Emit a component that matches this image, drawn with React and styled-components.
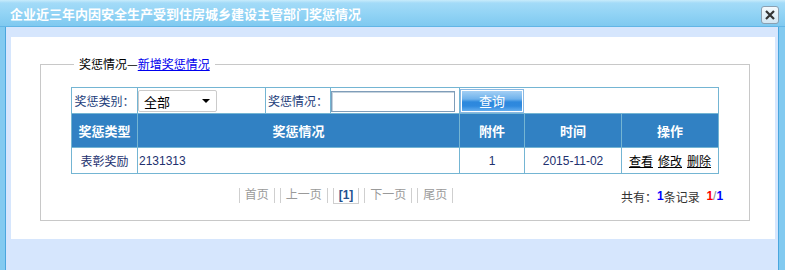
import styled, { createGlobalStyle } from "styled-components";

const GlobalStyle = createGlobalStyle`
    html, body {
        margin: 0;
        padding: 0;
        background: #d6e6fd;
    }
    body {
        font-family: "Liberation Sans", "Noto Sans CJK SC", sans-serif;
        font-size: 12px;
    }
`;

const App = () => {
    return (
        <>
            <GlobalStyle />
            <Window>
                <TitleBar>
                    <Title>企业近三年内因安全生产受到住房城乡建设主管部门奖惩情况</Title>
                    <CloseButton>
                        <svg width="10" height="10" viewBox="0 0 10 10">
                            <path d="M1 1 L9 9 M9 1 L1 9" stroke="#333" strokeWidth="2.2" />
                        </svg>
                    </CloseButton>
                </TitleBar>
                <Body>
                    <Panel>
                        <Fieldset>
                            <Legend>
                                奖惩情况—<LegendLink href="#">新增奖惩情况</LegendLink>
                            </Legend>
                            <Table>
                                <FilterRow>
                                    <Cell align="center">
                                        <Label>奖惩类别：</Label>
                                    </Cell>
                                    <Cell>
                                        <Select>
                                            全部
                                            <Arrow />
                                        </Select>
                                    </Cell>
                                    <Cell align="center">
                                        <Label>奖惩情况：</Label>
                                    </Cell>
                                    <Cell>
                                        <Input />
                                    </Cell>
                                    <Cell>
                                        <SearchButton>查询</SearchButton>
                                    </Cell>
                                </FilterRow>
                                <GridRow height={33}>
                                    <HeadCell>奖惩类型</HeadCell>
                                    <HeadCell>奖惩情况</HeadCell>
                                    <HeadCell>附件</HeadCell>
                                    <HeadCell>时间</HeadCell>
                                    <HeadCell>操作</HeadCell>
                                </GridRow>
                                <GridRow height={25}>
                                    <Cell align="center">
                                        <DataText>表彰奖励</DataText>
                                    </Cell>
                                    <Cell>
                                        <DataText indent>2131313</DataText>
                                    </Cell>
                                    <Cell align="center">
                                        <DataText>1</DataText>
                                    </Cell>
                                    <Cell align="center">
                                        <DataText>2015-11-02</DataText>
                                    </Cell>
                                    <Cell align="center">
                                        <Actions>
                                            <ActionLink href="#">查看</ActionLink>
                                            <ActionLink href="#">修改</ActionLink>
                                            <ActionLink href="#">删除</ActionLink>
                                        </Actions>
                                    </Cell>
                                </GridRow>
                            </Table>
                            <Pager>
                                <PageLinks>
                                    <PageItem>首页</PageItem>
                                    <PageItem>上一页</PageItem>
                                    <PageItem active>[1]</PageItem>
                                    <PageItem>下一页</PageItem>
                                    <PageItem>尾页</PageItem>
                                </PageLinks>
                                <Summary>
                                    共有：<Num color="#0000ff">1</Num>条记录&nbsp;&nbsp;
                                    <Num color="#ff0000">1</Num>
                                    <Slash>/</Slash>
                                    <Num color="#0000ff">1</Num>
                                </Summary>
                            </Pager>
                        </Fieldset>
                    </Panel>
                </Body>
            </Window>
        </>
    );
};

export default App;

const Window = styled.div`
    width: 785px;
    height: 270px;
    display: flex;
    flex-direction: column;
    overflow: hidden;
`;

const TitleBar = styled.div`
    height: 27px;
    box-sizing: border-box;
    display: flex;
    align-items: center;
    justify-content: space-between;
    padding: 0 6px 0 10px;
    border-bottom: 1px solid #62b5e6;
    background: linear-gradient(
        #c8ebfb 0,
        #a3dbf8 3px,
        #93d4f5 50%,
        #7fc9f0 100%
    );
`;

const Title = styled.div`
    color: #fff;
    font-family: "Noto Sans CJK SC", sans-serif;
    font-size: 13px;
    font-weight: bold;
    line-height: 16px;
    padding-top: 2px;
`;

const CloseButton = styled.div`
    width: 18px;
    height: 18px;
    box-sizing: border-box;
    margin-top: 3px;
    border: 1px solid #8aa0b2;
    border-radius: 3px;
    background: linear-gradient(#f4fafd, #d2e6f3);
    display: flex;
    align-items: center;
    justify-content: center;
`;

const Body = styled.div`
    flex: 1;
    background: #d6e6fd;
    border-left: 5px solid #82caf0;
    border-right: 6px solid #82caf0;
    box-shadow: inset 1px 0 #4aa6de, inset -1px 0 #4aa6de;
    padding: 10px 4px 0 6px;
`;

const Panel = styled.div`
    background: #fff;
    height: 202px;
    box-sizing: border-box;
    padding: 19px 25px 0 29px;
`;

const Fieldset = styled.fieldset`
    margin: 0;
    min-width: 0;
    border: 1px solid #c8c8c8;
    padding: 15px 30px 14px 30px;
`;

const Legend = styled.legend`
    margin-left: 3px;
    padding: 0 5px;
    font-family: "Noto Sans CJK SC", sans-serif;
    font-size: 12px;
    line-height: 16px;
    color: #000;
`;

const LegendLink = styled.a`
    color: #0000ee;
    text-decoration: underline;
`;

const Table = styled.div`
    width: 648px;
    box-sizing: border-box;
    padding: 1px;
    display: flex;
    flex-direction: column;
    gap: 1px;
    background: #74b5d3;
`;

const FilterRow = styled.div`
    display: grid;
    grid-template-columns: 65px 127px 64px 128px 258px;
    grid-auto-rows: 25px;
    gap: 1px;
`;

const GridRow = styled.div`
    display: grid;
    grid-template-columns: 65px 321px 64px 96px 96px;
    grid-auto-rows: ${(props) => props.height}px;
    gap: 1px;
`;

const Cell = styled.div`
    background: #fff;
    display: flex;
    align-items: center;
    justify-content: ${(props) => (props.align === "center" ? "center" : "flex-start")};
    overflow: hidden;
`;

const HeadCell = styled.div`
    background: #3181c3;
    color: #fff;
    font-family: "Noto Sans CJK SC", sans-serif;
    font-size: 13px;
    font-weight: bold;
    display: flex;
    align-items: center;
    justify-content: center;
`;

const Label = styled.span`
    color: #1c3d7a;
    font-size: 12px;
`;

const Select = styled.div`
    width: 79px;
    height: 22px;
    margin-top: 1px;
    box-sizing: border-box;
    border: 1px solid #cbcbcb;
    border-radius: 2px;
    padding: 0 6px 0 5px;
    display: flex;
    align-items: center;
    justify-content: space-between;
    font-family: "Noto Sans CJK SC", sans-serif;
    font-size: 13px;
    color: #000;
`;

const Arrow = styled.span`
    width: 0;
    height: 0;
    border-left: 4px solid transparent;
    border-right: 4px solid transparent;
    border-top: 4px solid #000;
`;

const Input = styled.div`
    width: 124px;
    height: 21px;
    margin-top: 1px;
    box-sizing: border-box;
    border: 1px solid #7f9db9;
    box-shadow: inset 1px 1px #c5d3de;
    background: #fff;
`;

const SearchButton = styled.div`
    width: 62px;
    height: 22px;
    margin-left: 1px;
    box-sizing: border-box;
    border: 1px solid #fff;
    outline: 1px solid #8ab8e3;
    background: linear-gradient(
        #a4cff4 0%,
        #6fb2ec 40%,
        #2d88dd 55%,
        #2f89de 75%,
        #62acee 100%
    );
    color: #fff;
    font-family: "Noto Sans CJK SC", sans-serif;
    font-size: 13px;
    display: flex;
    align-items: center;
    justify-content: center;
`;

const DataText = styled.span`
    color: #22306e;
    font-size: 12px;
    padding-left: ${(props) => (props.indent ? "1px" : "0")};
`;

const Actions = styled.div`
    display: flex;
    gap: 5px;
`;

const ActionLink = styled.a`
    color: #000;
    font-size: 12px;
    text-decoration: underline;
`;

const Pager = styled.div`
    width: 648px;
    margin-top: 12px;
    height: 20px;
    display: grid;
    grid-template-columns: 550px 1fr;
    align-items: center;
`;

const PageLinks = styled.div`
    display: flex;
    justify-content: center;
`;

const PageItem = styled.span`
    height: 15px;
    line-height: 15px;
    padding: 0 5px;
    margin: 0 2.5px;
    border-left: 1px solid #cfcfcf;
    border-right: 1px solid #cfcfcf;
    border-bottom: ${(props) => (props.active ? "1px solid #cfcfcf" : "none")};
    color: ${(props) => (props.active ? "#24508f" : "#9a9a9a")};
    font-weight: ${(props) => (props.active ? "bold" : "normal")};
    font-size: 12px;
`;

const Summary = styled.div`
    display: flex;
    justify-content: flex-end;
    align-items: center;
    color: #333;
    font-size: 12px;
    white-space: nowrap;
`;

const Num = styled.b`
    color: ${(props) => props.color};
`;

const Slash = styled.span`
    color: #888;
`;
